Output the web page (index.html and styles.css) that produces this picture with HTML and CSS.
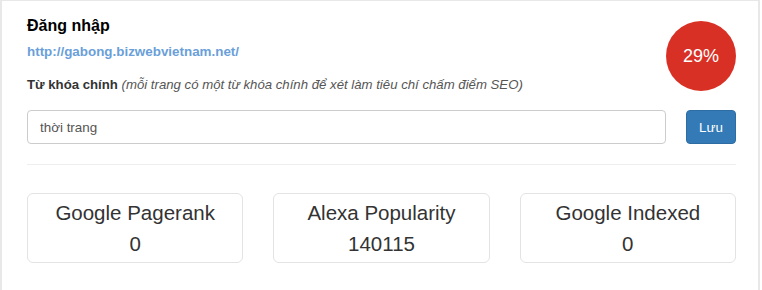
FILE: index.html
```html
<!DOCTYPE html>
<html lang="vi">
<head>
<meta charset="utf-8">
<title>SEO</title>
<link rel="stylesheet" href="styles.css">
</head>
<body>
<div class="panel">
  <div class="header">
    <div class="info">
      <h3 class="title">Đăng nhập</h3>
      <a class="url" href="#">http://gabong.bizwebvietnam.net/</a>
      <p class="keyword"><b>Từ khóa chính</b> <i>(mỗi trang có một từ khóa chính để xét làm tiêu chí chấm điểm SEO)</i></p>
    </div>
    <div class="score">29%</div>
  </div>
  <div class="form-row">
    <input class="kw-input" type="text" value="thời trang">
    <button class="btn-save" type="button">Lưu</button>
  </div>
  <hr class="divider">
  <div class="stats">
    <div class="stat"><div class="stat-label">Google Pagerank</div><div class="stat-value">0</div></div>
    <div class="stat"><div class="stat-label">Alexa Popularity</div><div class="stat-value">140115</div></div>
    <div class="stat"><div class="stat-label">Google Indexed</div><div class="stat-value">0</div></div>
  </div>
</div>
</body>
</html>
```

FILE: styles.css
```css
* { box-sizing: border-box; }
html, body { margin: 0; padding: 0; background: #fff; }
body {
  font-family: "Liberation Sans", Arial, sans-serif;
  color: #333;
  width: 762px;
  height: 290px;
  overflow: hidden;
}
.panel {
  width: 760px;
  height: 290px;
  border-top: 1px solid #e8e8e8;
  border-left: 2px solid #e8e8e8;
  border-right: 2px solid #e8e8e8;
  padding: 16px 22px 0 25px;
  background: #fff;
}
.header {
  display: flex;
  justify-content: space-between;
  align-items: flex-start;
}
.info { display: flex; flex-direction: column; align-items: flex-start; }
.title {
  margin: 0;
  font-size: 16px;
  line-height: 18px;
  font-weight: bold;
  color: #000;
}
.url {
  margin-top: 8px;
  font-size: 13.4px;
  line-height: 18px;
  font-weight: bold;
  color: #6a9fd9;
  text-decoration: none;
}
.keyword {
  margin: 15px 0 0;
  font-size: 13.2px;
  line-height: 18px;
  color: #333;
}
.keyword i { color: #555; }
.score {
  margin-top: 4px;
  width: 70px;
  height: 70px;
  border-radius: 50%;
  background: #d93025;
  color: #fff;
  font-size: 18px;
  display: flex;
  align-items: center;
  justify-content: center;
}
.form-row {
  display: flex;
  gap: 20px;
  margin-top: 16px;
}
.kw-input {
  flex: 1;
  height: 34px;
  border: 1px solid #ccc;
  border-radius: 4px;
  padding: 0 12px;
  font-family: inherit;
  font-size: 13.4px;
  color: #555;
  background: #fff;
  outline: none;
}
.btn-save {
  flex: none;
  width: 50px;
  height: 34px;
  border: 1px solid #2e6da4;
  border-radius: 4px;
  background: #337ab7;
  color: #fff;
  font-family: inherit;
  font-size: 13.4px;
  padding: 0;
}
.divider {
  margin: 20px 0 0;
  border: 0;
  border-top: 1px solid #eee;
  height: 0;
}
.stats {
  margin-top: 28px;
  display: grid;
  grid-template-columns: repeat(3, 1fr);
  gap: 30px;
}
.stat {
  height: 70px;
  border: 1px solid #e3e3e3;
  border-radius: 6px;
  padding-top: 3px;
  text-align: center;
  font-size: 20.5px;
  line-height: 31px;
  color: #333;
}
```
